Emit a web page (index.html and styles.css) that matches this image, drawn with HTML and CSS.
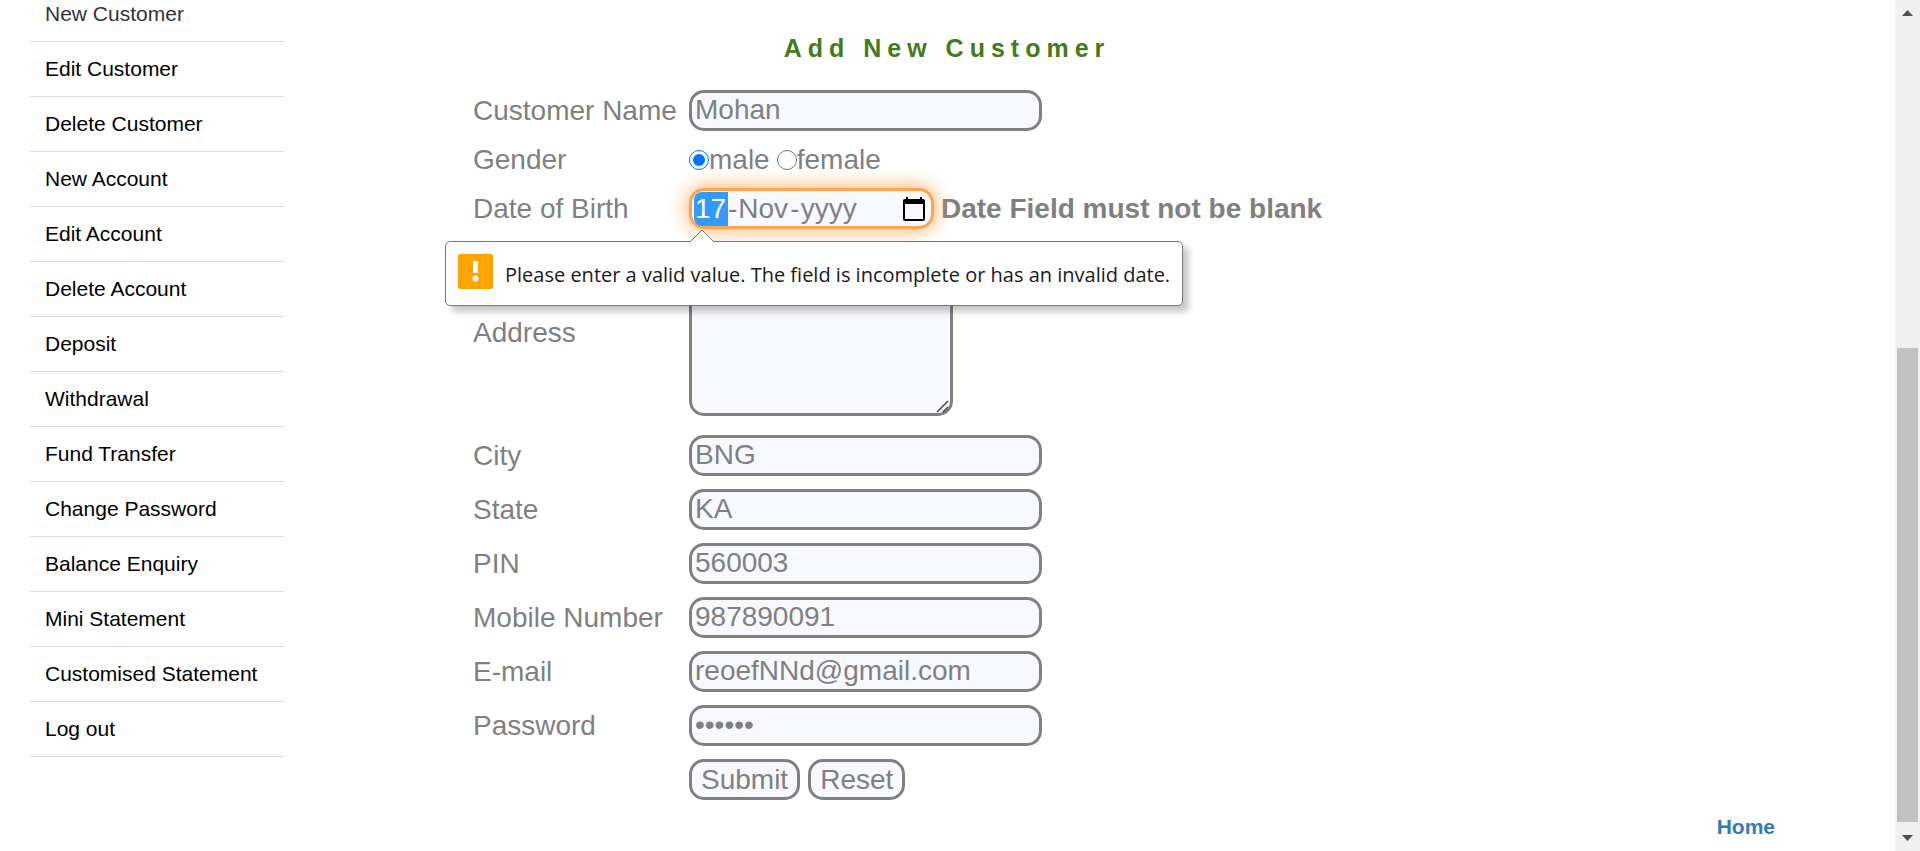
FILE: index.html
```html
<!DOCTYPE html>
<html lang="en">
<head>
<meta charset="utf-8">
<title>Add New Customer</title>
<link rel="stylesheet" href="styles.css">
</head>
<body>
<div class="page">
  <nav class="menu" aria-label="Manager menu">
    <ul class="menu-list">
      <li class="menu-item"><a class="menu-link current" href="#">New Customer</a></li>
      <li class="menu-item"><a class="menu-link" href="#">Edit Customer</a></li>
      <li class="menu-item"><a class="menu-link" href="#">Delete Customer</a></li>
      <li class="menu-item"><a class="menu-link" href="#">New Account</a></li>
      <li class="menu-item"><a class="menu-link" href="#">Edit Account</a></li>
      <li class="menu-item"><a class="menu-link" href="#">Delete Account</a></li>
      <li class="menu-item"><a class="menu-link" href="#">Deposit</a></li>
      <li class="menu-item"><a class="menu-link" href="#">Withdrawal</a></li>
      <li class="menu-item"><a class="menu-link" href="#">Fund Transfer</a></li>
      <li class="menu-item"><a class="menu-link" href="#">Change Password</a></li>
      <li class="menu-item"><a class="menu-link" href="#">Balance Enquiry</a></li>
      <li class="menu-item"><a class="menu-link" href="#">Mini Statement</a></li>
      <li class="menu-item"><a class="menu-link" href="#">Customised Statement</a></li>
      <li class="menu-item"><a class="menu-link" href="#">Log out</a></li>
    </ul>
  </nav>
  <main class="content">
    <form class="customer-form">
      <h1 class="title">Add New Customer</h1>
      <div class="row">
        <label class="label" for="name">Customer Name</label>
        <input class="field" id="name" type="text" value="Mohan">
      </div>
      <div class="row" role="radiogroup" aria-labelledby="gender-label">
        <span class="label" id="gender-label">Gender</span>
        <div class="choices">
          <label class="choice"><input class="radio" type="radio" name="gender" checked>male</label>
          <label class="choice"><input class="radio" type="radio" name="gender">female</label>
        </div>
      </div>
      <div class="row">
        <label class="label" for="day">Date of Birth</label>
        <div class="date-cell">
          <div class="date-field">
            <input class="part day" id="day" type="text" value="17" aria-label="Day"><span>-</span><input class="part month" type="text" value="Nov" aria-label="Month"><span>-</span><input class="part year" type="text" value="yyyy" aria-label="Year">
            <button class="picker" type="button" aria-label="Show date picker">
              <svg class="picker-icon" viewBox="0 0 22 24" aria-hidden="true"><path fill="#000" fill-rule="evenodd" d="M3 0h2v2h12V0h2v2h1a2 2 0 0 1 2 2v18a2 2 0 0 1-2 2H2a2 2 0 0 1-2-2V4a2 2 0 0 1 2-2h1zM2 7v15h18V7z"/></svg>
            </button>
          </div>
          <div class="tooltip" role="alert">
            <svg class="tooltip-arrow" viewBox="0 0 26 14" aria-hidden="true"><path d="M1 13 13 1l12 12v1H1z" fill="#fff"/><path d="M1 13 13 1l12 12" fill="none" stroke="#767676"/></svg>
            <svg class="warning" viewBox="0 0 35 35" aria-hidden="true"><rect width="35" height="35" rx="2" fill="#ffa400"/><path d="M15 7h5v12h-5z" fill="#fff"/><circle cx="17.500" cy="24.500" r="3" fill="#fff"/></svg>
            <span class="tooltip-text">Please enter a valid value. The field is incomplete or has an invalid date.</span>
          </div>
        </div>
        <strong class="error">Date Field must not be blank</strong>
      </div>
      <div class="row address-row">
        <label class="label" for="address">Address</label>
        <div class="address-cell">
          <textarea class="field address" id="address"></textarea>
          <svg class="grip" viewBox="0 0 13 13" aria-hidden="true"><path d="M1 12 12 1M7 12l5-5" fill="none" stroke="#444" stroke-width="1.500"/></svg>
        </div>
      </div>
      <div class="row">
        <label class="label" for="city">City</label>
        <input class="field" id="city" type="text" value="BNG">
      </div>
      <div class="row">
        <label class="label" for="state">State</label>
        <input class="field" id="state" type="text" value="KA">
      </div>
      <div class="row">
        <label class="label" for="pin">PIN</label>
        <input class="field" id="pin" type="text" value="560003">
      </div>
      <div class="row">
        <label class="label" for="mobile">Mobile Number</label>
        <input class="field" id="mobile" type="text" value="987890091">
      </div>
      <div class="row">
        <label class="label" for="email">E-mail</label>
        <input class="field" id="email" type="text" value="reoefNNd@gmail.com">
      </div>
      <div class="row">
        <label class="label" for="password">Password</label>
        <input class="field" id="password" type="password" value="secret">
      </div>
      <div class="row actions">
        <button class="button" type="submit">Submit</button>
        <button class="button" type="reset">Reset</button>
      </div>
    </form>
    <a class="home" href="#">Home</a>
  </main>
  <div class="scrollbar" aria-hidden="true">
    <svg class="arrow" viewBox="0 0 11 6"><path d="M0 6 5.500 0 11 6z" fill="#505050"/></svg>
    <div class="track"><div class="thumb"></div></div>
    <svg class="arrow" viewBox="0 0 11 6"><path d="M0 0h11L5.500 6z" fill="#505050"/></svg>
  </div>
</div>
</body>
</html>
```
FILE: styles.css
```css
* {
  box-sizing: border-box;
}

body {
  margin: 0;
  background: #fff;
  color: #808080;
  font-family: "Liberation Sans", Arial, sans-serif;
  font-size: 28px;
  line-height: 31px;
}

.page {
  display: flex;
  height: 100vh;
  overflow: hidden;
}

.menu {
  flex: none;
  width: 284px;
  padding-left: 30px;
}

.menu-list {
  margin: 0;
  padding: 0;
  list-style: none;
}

.menu-item {
  padding: 15px;
  border-bottom: 1px solid #dddddd;
  font-size: 21px;
  line-height: 24px;
}

.menu-item:first-child {
  padding-top: 2px;
}

.menu-link {
  display: block;
  color: #000;
  text-decoration: none;
  white-space: nowrap;
}

.menu-link.current {
  color: #333;
}

.content {
  flex: 1;
  min-width: 0;
  padding: 33px 120px 0 189px;
}

.customer-form {
  display: flex;
  flex-direction: column;
  gap: 13px;
  max-width: 948px;
}

.title {
  margin: 0 0 14px;
  color: #457a1c;
  font-size: 25px;
  line-height: 30px;
  letter-spacing: 6px;
  text-align: center;
}

.row {
  display: flex;
  align-items: center;
}

.label {
  flex: none;
  width: 216px;
}

.field,
.date-field,
.button {
  height: 41px;
  border: 3px solid #808080;
  border-radius: 15px;
  background: #f8f8ff;
  color: #808080;
  font: inherit;
}

.field {
  width: 353px;
  padding: 0 3px 2px;
}

.address-row {
  height: 180px;
}

.address-cell {
  position: relative;
}

.address {
  display: block;
  width: 264px;
  height: 168px;
  resize: none;
}

.grip {
  position: absolute;
  right: 4px;
  bottom: 3px;
  width: 13px;
  height: 13px;
}

.choices {
  display: flex;
  gap: 7px;
}

.choice {
  display: flex;
  align-items: center;
}

.radio {
  width: 20px;
  height: 20px;
  margin: 0;
  accent-color: #0075ff;
}

.date-cell {
  position: relative;
}

.date-field {
  display: flex;
  align-items: center;
  width: 245px;
  padding: 0 6px 0 2px;
  border-color: #ffa54f;
  box-shadow: 0 0 20px #ffa54f;
}

.part {
  height: 34px;
  padding: 0 1px;
  border: 0;
  background: transparent;
  color: inherit;
  font: inherit;
}

.day {
  width: 34px;
  border-radius: 8px 0 0 8px;
  background: #3399ff;
  color: #fff;
}

.month {
  width: 53px;
}

.year {
  width: 60px;
}

.picker {
  display: flex;
  margin-left: auto;
  padding: 0;
  border: 0;
  background: none;
}

.picker-icon {
  width: 22px;
  height: 24px;
}

.error {
  margin-left: 7px;
  white-space: nowrap;
}

.tooltip {
  position: absolute;
  z-index: 1;
  top: 53px;
  left: -244px;
  display: flex;
  align-items: flex-start;
  gap: 12px;
  height: 65px;
  padding: 12px 12px 0;
  border: 1px solid #767676;
  border-radius: 5px;
  background: #fff;
  box-shadow: 6px 6px 6px rgba(0, 0, 0, 0.22);
  color: #1a1a1a;
  font-family: "Open Sans", sans-serif;
  font-size: 20px;
  font-weight: 370;
  white-space: nowrap;
}

.tooltip-text {
  padding-top: 5px;
}

.tooltip-arrow {
  position: absolute;
  top: -13px;
  left: 243px;
  width: 26px;
  height: 14px;
}

.warning {
  width: 35px;
  height: 35px;
}

.actions {
  gap: 8px;
  padding-left: 216px;
}

.button {
  padding: 0 9px;
}

.home {
  display: block;
  margin-top: 15px;
  color: #337ab7;
  font-size: 21px;
  font-weight: bold;
  line-height: 24px;
  text-align: right;
  text-decoration: none;
}

.scrollbar {
  display: flex;
  flex: none;
  flex-direction: column;
  align-items: center;
  gap: 13px;
  width: 25px;
  padding: 10px 2px;
  background: #f0f0f0;
}

.arrow {
  flex: none;
  width: 11px;
  height: 6px;
}

.track {
  display: grid;
  flex: 1;
  grid-template-rows: 319fr 474fr;
  align-self: stretch;
}

.thumb {
  grid-row: 2;
  background: #c1c1c1;
}
```
